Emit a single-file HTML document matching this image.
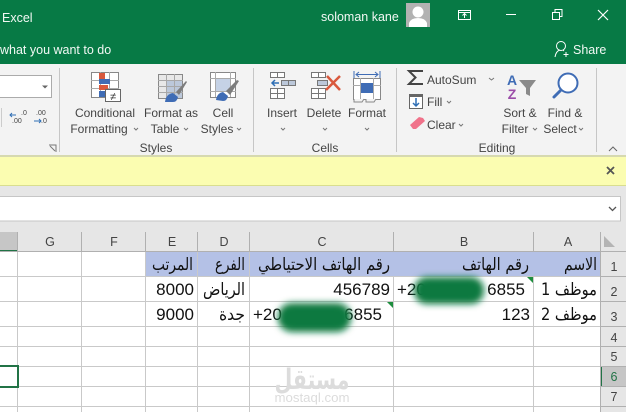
<!DOCTYPE html>
<html><head><meta charset="utf-8"><style>
html,body{margin:0;padding:0;background:#fff;width:626px;height:412px;overflow:hidden}
svg{display:block}
text{font-family:"Liberation Sans","DejaVu Sans",sans-serif}
.w{fill:#f2f8f4;font-size:12.5px}
.r{fill:#444;font-size:12px;text-anchor:middle}
.l{fill:#444;font-size:12px}
.a{fill:#111;font-size:17px;direction:rtl;text-anchor:start;font-family:"DejaVu Sans",sans-serif}
.n{fill:#111;font-size:17px;text-anchor:end}
.c{fill:none;stroke:#777;stroke-width:1}
</style></head><body>
<svg width="626" height="412" viewBox="0 0 626 412" xmlns="http://www.w3.org/2000/svg">
<defs><filter id="b" x="-30%" y="-60%" width="160%" height="220%"><feGaussianBlur stdDeviation="3.5"/></filter></defs>
<!-- title -->
<rect width="626" height="64" fill="#077a45"/>
<text x="2" y="22" class="w">Excel</text>
<text x="0" y="54" class="w">what you want to do</text>
<text x="321" y="21" class="w">soloman kane</text>
<rect x="406" y="3" width="24" height="24" fill="#b2b2b2"/>
<circle cx="418" cy="12" r="5.500" fill="#fff"/><path d="M409 27v-4q2-5 9-5t9 5v4z" fill="#fff"/>
<g fill="none" stroke="#fff" stroke-width="1">
<rect x="458.500" y="10.500" width="12" height="9"/><path d="M458 12.500h13M464.500 18v-4M462.500 15.500l2-2 2 2"/>
<path d="M506 14.500h10"/>
<rect x="552.500" y="12.500" width="7" height="7"/><path d="M555 12v-2.500h7v7h-2"/>
<path d="M598 10l10 10M608 10l-10 10" stroke-width="1.200"/>
<circle cx="561" cy="46" r="4.500"/><path d="M555 57q1-6 5-7M563 50l1 1M566 52v5M563.500 54.500h5"/>
</g>
<text x="573" y="54" class="w">Share</text>
<!-- ribbon -->
<rect y="64" width="626" height="91" fill="#f3f3f3"/>
<rect x="-1" y="75.500" width="52.500" height="22" fill="#fff" stroke="#ababab"/>
<path d="M42 85.500h6l-3 3z" fill="#666"/>
<path d="M1.500 108v19" stroke="#ccc"/>
<g stroke="#c6c6c6"><path d="M59.500 68v84M253.500 68v84M396.500 68v84M596.500 68v84"/></g>
<text x="21" y="115" font-size="7" fill="#444">.0</text><text x="12" y="123" font-size="7" fill="#444">.00</text>
<path d="M10 115h6M12 113l-2 2 2 2" stroke="#2f6fb5" fill="none"/>
<text x="36" y="115" font-size="7" fill="#444">.00</text><text x="41" y="123" font-size="7" fill="#444">.0</text>
<path d="M34 121h7M39 119l2 2-2 2" stroke="#2f6fb5" fill="none"/>
<path d="M49 145h7v7M50 146l5 5" fill="none" stroke="#777"/>
<!-- cond fmt -->
<rect x="91.500" y="72.500" width="27" height="25" fill="#fff" stroke="#888"/>
<path d="M91 80.500h28M91 88.500h28M100.500 72v25M109.500 72v25" stroke="#aaa"/>
<rect x="99" y="73" width="6" height="6" fill="#d9593d"/><rect x="99" y="79" width="11" height="5" fill="#3f6cb5"/><rect x="99" y="85" width="9" height="5" fill="#d9593d"/><rect x="99" y="91" width="6" height="6" fill="#3f6cb5"/>
<rect x="105.500" y="89.500" width="15" height="12" fill="#fff" stroke="#666"/><text x="113" y="100" font-size="11" text-anchor="middle" fill="#333">≠</text>
<!-- format as table -->
<rect x="158.500" y="74.500" width="24" height="24" fill="#e8e8e8" stroke="#888"/>
<rect x="167" y="80" width="15" height="18" fill="#bcc8da"/>
<path d="M158 80.500h25M158 86.500h25M158 92.500h25M166.500 74v25M174.500 74v25" stroke="#a8a8a8"/>
<path d="M176 92l10-11 1 1-8 13z" fill="#7d7d7d"/><path d="M165 102q1-8 8-9l5 4q-1 5-5 5z" fill="#3f6cb5"/>
<!-- cell styles -->
<rect x="210.500" y="72.500" width="25" height="25" fill="#fff" stroke="#888"/>
<rect x="216" y="78" width="15" height="13" fill="#c5d2e6"/>
<path d="M210 78.500h26M210 91.500h26M215.500 72v25M230.500 72v25" stroke="#aaa"/>
<path d="M226 91l11-11 2 1-9 14z" fill="#7d7d7d"/><path d="M216 100q1-7 7-8l5 4q-1 5-5 5z" fill="#3f6cb5"/>
<!-- insert -->
<g class="c"><rect x="270.500" y="72.500" width="14" height="5" fill="#fff"/><path d="M277.500 72v5"/>
<rect x="270.500" y="88.500" width="14" height="10" fill="#fff"/><path d="M277.500 88v10M270 93.500h15"/>
<rect x="281.500" y="80.500" width="14" height="5" fill="#bcc8da"/><path d="M288.500 80v5"/></g>
<path d="M272 83h7M275 80l-3 3 3 3" stroke="#2f6fb5" stroke-width="1.500" fill="none"/>
<!-- delete -->
<g class="c"><rect x="311.500" y="72.500" width="14" height="5" fill="#fff"/><path d="M318.500 72v5"/>
<rect x="311.500" y="88.500" width="14" height="10" fill="#fff"/><path d="M318.500 88v10M311 93.500h15"/>
<rect x="317.500" y="80.500" width="10" height="5" fill="#bcc8da"/></g>
<path d="M327 76l13 14M340 76l-14 14" stroke="#d9593d" stroke-width="2.500"/>
<!-- format -->
<path d="M354 71v7M380 71v7" stroke="#3f6cb5"/><path d="M356 74.500h22M359 72l-3 2.500 3 2.500M375 72l3 2.500-3 2.500" stroke="#3f6cb5" fill="none"/>
<rect x="353.500" y="78.500" width="27" height="21" fill="#fff" stroke="#888"/>
<path d="M353 85.500h28M360.500 78v21M373.500 78v21" stroke="#aaa"/>
<rect x="361" y="83" width="12" height="10" fill="#3f6cb5"/>
<path d="M354 99v3h8l2-3M366 99v3h8l2-3" fill="#f3f3f3" stroke="#888"/>
<!-- editing -->
<path d="M423 71h-14l6.500 6.500-6.500 6.500h14" fill="none" stroke="#444" stroke-width="2"/>
<text x="427" y="84" class="l">AutoSum</text>
<path d="M489 78l2.500 2 2.500-2M447 101l2 2 2-2M459 124l2 2 2-2" stroke="#777" fill="none"/>
<rect x="409.500" y="94.500" width="13" height="14" fill="#fff" stroke="#666"/><rect x="409" y="94" width="14" height="3" fill="#666"/>
<path d="M416 98v8M413 103l3 3 3-3" stroke="#2f6fb5" stroke-width="1.500" fill="none"/>
<text x="427" y="106" class="l">Fill</text>
<path d="M410 125l9-8 4 1 2 3-9 8h-3z" fill="#f0728a"/>
<text x="427" y="129" class="l">Clear</text>
<text x="512" y="85" font-size="14" font-weight="bold" fill="#3f6cb5" text-anchor="middle">A</text>
<text x="512" y="99" font-size="14" font-weight="bold" fill="#9b4da8" text-anchor="middle">Z</text>
<path d="M519 80h17l-6 8v8l-4-2v-6z" fill="#8a8a8a"/>
<circle cx="568" cy="83" r="9.500" fill="#fff" stroke="#3f6cb5" stroke-width="2"/><path d="M560 91l-6 6" stroke="#3f6cb5" stroke-width="3" stroke-linecap="round"/>
<!-- labels -->
<text x="105" y="117" class="r">Conditional</text>
<text x="99" y="133" class="r">Formatting</text>
<text x="171" y="117" class="r">Format as</text>
<text x="165" y="133" class="r">Table</text>
<text x="223" y="117" class="r">Cell</text>
<text x="217" y="133" class="r">Styles</text>
<text x="282" y="117" class="r">Insert</text>
<text x="324" y="117" class="r">Delete</text>
<text x="367" y="117" class="r">Format</text>
<text x="520" y="117" class="r">Sort &amp;</text>
<text x="515" y="133" class="r">Filter</text>
<text x="565" y="117" class="r">Find &amp;</text>
<text x="560" y="133" class="r">Select</text>
<text x="156" y="152" class="r">Styles</text>
<text x="325" y="152" class="r">Cells</text>
<text x="497" y="152" class="r">Editing</text>
<path d="M134 128l2 2 2-2M184 128l2 2 2-2M237 128l2 2 2-2M281 128l2 2 2-2M323 128l2 2 2-2M365 128l2 2 2-2M533 128l2 2 2-2M579 128l2 2 2-2" stroke="#777" fill="none"/>
<path d="M609 151l4-4 4 4" stroke="#666" fill="none"/>
<!-- message bar -->
<rect y="155" width="626" height="31" fill="#fbfdb1"/>
<rect y="155" width="626" height="2" fill="#d6d9b0"/><rect y="185" width="626" height="1" fill="#d9de8f"/>
<path d="M607 167l7 7M614 167l-7 7" stroke="#555" stroke-width="1.800"/>
<!-- formula bar -->
<rect y="186" width="626" height="46" fill="#e6e6e6"/>
<rect x="-2" y="196.500" width="622.500" height="24.500" fill="#fff" stroke="#c6c6c6"/>
<path d="M609 207l3.500 3.500 3.500-3.500" stroke="#555" stroke-width="1.300" fill="none"/>
<!-- sheet -->
<rect y="232" width="626" height="19" fill="#e6e6e6"/>
<rect y="232" width="18" height="19" fill="#c6c6c6"/><rect y="250" width="18" height="2" fill="#217346"/>
<rect x="600" y="251" width="26" height="161" fill="#e6e6e6"/>
<rect x="600" y="367" width="26" height="20" fill="#c6c6c6"/><rect x="600" y="367" width="2" height="20" fill="#217346"/>
<rect x="145" y="252" width="455" height="25" fill="#b4c1e6"/>
<g stroke="#c9c9c9">
<path d="M0 276.500h600M0 301.500h600M0 326.500h600M0 346.500h600M0 366.500h600M0 386.500h600M0 406.500h600"/>
<path d="M17.500 252v160M81.500 252v160M145.500 252v160M197.500 277v135M197.500 252v25M249.500 252v160M393.500 277v135M533.500 277v135"/>
</g>
<g stroke="#b0b0b0"><path d="M0 251.500h626M17.500 232v19M81.500 232v19M145.500 232v19M197.500 232v19M249.500 232v19M393.500 232v19M533.500 232v19M600.500 232v180M600 276.500h26M600 301.500h26M600 326.500h26M600 346.500h26M600 366.500h26M600 386.500h26M600 406.500h26"/></g>
<path d="M604 247v-11l11 11z" fill="#b4b4b4"/>
<rect x="-3" y="366" width="21" height="21" fill="none" stroke="#217346" stroke-width="2"/>
<g font-size="12.500" fill="#444" text-anchor="middle">
<text x="50" y="246">G</text><text x="114" y="246">F</text><text x="172" y="246">E</text><text x="224" y="246">D</text><text x="322" y="246">C</text><text x="464" y="246">B</text><text x="568" y="246">A</text>
<text x="614" y="271">1</text><text x="614" y="296">2</text><text x="614" y="321">3</text><text x="614" y="342">4</text><text x="614" y="361">5</text><text x="614" y="381" fill="#217346">6</text><text x="614" y="401">7</text>
</g>
<!-- cells -->
<text x="597" y="270" class="a" textLength="33" lengthAdjust="spacingAndGlyphs">الاسم</text>
<text x="529" y="270" class="a" textLength="67" lengthAdjust="spacingAndGlyphs">رقم الهاتف</text>
<text x="390" y="270" class="a" textLength="132" lengthAdjust="spacingAndGlyphs">رقم الهاتف الاحتياطي</text>
<text x="245" y="270" class="a" textLength="30" lengthAdjust="spacingAndGlyphs">الفرع</text>
<text x="193" y="270" class="a" textLength="41" lengthAdjust="spacingAndGlyphs">المرتب</text>
<text x="597" y="295" class="a" textLength="56" lengthAdjust="spacingAndGlyphs">موظف 1</text>
<text x="597" y="320" class="a" textLength="56" lengthAdjust="spacingAndGlyphs">موظف 2</text>
<text x="245" y="295" class="a" textLength="42" lengthAdjust="spacingAndGlyphs">الرياض</text>
<text x="245" y="320" class="a" textLength="26" lengthAdjust="spacingAndGlyphs">جدة</text>
<text x="530" y="320" class="n">123</text>
<text x="390" y="295" class="n">456789</text>
<text x="525" y="295" class="n">6855</text>
<text x="397" y="295" class="n" style="text-anchor:start">+20</text>
<text x="382" y="320" class="n">6855</text>
<text x="253" y="320" class="n" style="text-anchor:start">+20</text>
<text x="194" y="295" class="n">8000</text>
<text x="194" y="320" class="n">9000</text>
<path d="M527 277h6v6zM387 302h6v6z" fill="#1e8e3e"/>
<!-- blobs -->
<g filter="url(#b)" fill="#08793f"><rect x="414" y="277" width="70" height="27" rx="13"/><rect x="278" y="303" width="73" height="29" rx="14"/></g>
<!-- watermark -->
<g fill="#dcdcdc"><text x="312" y="389" font-size="28" text-anchor="middle" style="font-family:'DejaVu Sans',sans-serif;font-weight:bold" textLength="75" lengthAdjust="spacingAndGlyphs">مستقل</text>
<text x="312" y="402" font-size="13" text-anchor="middle" textLength="75" lengthAdjust="spacingAndGlyphs">mostaql.com</text></g>
</svg>
</body></html>
